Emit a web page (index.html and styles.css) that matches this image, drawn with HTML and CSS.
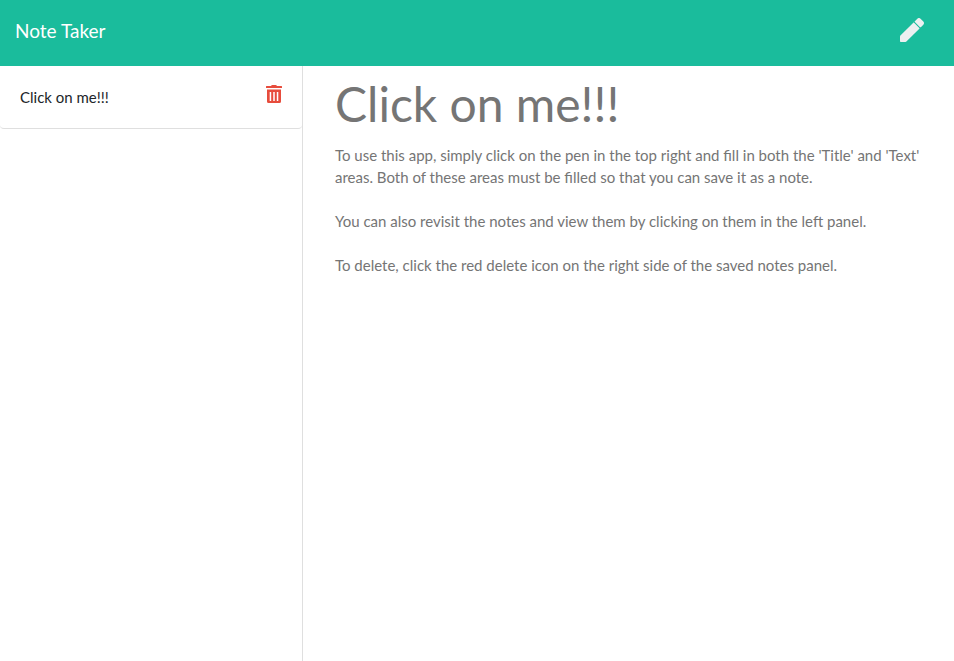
FILE: index.html
```html
<!DOCTYPE html>
<html lang="en">
<head>
<meta charset="utf-8">
<meta name="viewport" content="width=device-width, initial-scale=1">
<title>Note Taker</title>
<link rel="stylesheet" href="styles.css">
</head>
<body>
<header class="navbar">
  <a class="brand" href="#">Note Taker</a>
  <button class="icon-button new-note" type="button" aria-label="New note">
    <svg viewBox="0 0 512 512" width="24" height="24" aria-hidden="true"><path fill="currentColor" d="M498 142l-54 54c-5 5-12 5-17 0l-111-111c-5-5-5-12 0-17l54-54c19-19 49-19 68 0l60 60c19 19 19 49 0 68zM284 100c5-5 12-5 17 0l111 111c5 5 5 12 0 17L142 498c-8 9-16 14-28 14H16c-9 0-16-7-16-16v-98c0-12 5-20 14-28z"/></svg>
  </button>
</header>
<main class="layout">
  <aside class="sidebar">
    <ul class="note-list">
      <li class="note-item">
        <a class="note-link" href="#">Click on me!!!</a>
        <button class="icon-button delete-note" type="button" aria-label="Delete note">
          <svg viewBox="0 0 16 18" width="16" height="18" aria-hidden="true"><path fill="currentColor" fill-rule="evenodd" d="M.5 1H5l.6-.7Q6 0 6.500 0h3q.5 0 .9.300L11 1h4.500q.5 0 .5.500V3H0V1.500Q0 1 .5 1zM1 4.500h14v12q0 1.500-1.500 1.500h-11Q1 18 1 16.500zM3.700 7v9h1.500V7zM7.250 7v9h1.500V7zM10.800 7v9h1.500V7z"/></svg>
        </button>
      </li>
    </ul>
  </aside>
  <article class="note">
    <h1 class="note-title">Click on me!!!</h1>
    <div class="note-text">
      <p>To use this app, simply click on the pen in the top right and fill in both the 'Title' and 'Text' areas. Both of these areas must be filled so that you can save it as a note.</p>
      <p>You can also revisit the notes and view them by clicking on them in the left panel.</p>
      <p>To delete, click the red delete icon on the right side of the saved notes panel.</p>
    </div>
  </article>
</main>
</body>
</html>
```

FILE: styles.css
```css
* {
  box-sizing: border-box;
}

body {
  display: flex;
  flex-direction: column;
  min-height: 100vh;
  margin: 0;
  background: #fff;
  color: #212529;
  font: 15px/22px Lato, sans-serif;
}

.navbar {
  display: flex;
  align-items: flex-start;
  justify-content: space-between;
  min-height: 66px;
  padding: 17px 30px 17px 15px;
  background: #1abc9c;
  color: #fff;
}

.brand {
  color: inherit;
  font-size: 19px;
  line-height: 28px;
  text-decoration: none;
}

.icon-button {
  display: flex;
  padding: 0;
  border: 0;
  background: none;
  cursor: pointer;
}

.new-note {
  padding-top: 1px;
  color: #ecf0f1;
}

.layout {
  display: grid;
  flex: 1;
  grid-template-columns: 303px minmax(0, 1fr);
}

.sidebar {
  border-right: 1px solid #dfdfdf;
}

.note-list {
  margin: 0;
  padding: 0;
  list-style: none;
}

.note-item {
  display: flex;
  align-items: flex-start;
  justify-content: space-between;
  min-height: 63px;
  padding: 19px 20px;
  border-bottom: 1px solid #dfdfdf;
  border-radius: 0 0 4px 4px;
}

.note-link {
  color: #212529;
  line-height: 24px;
  text-decoration: none;
}

.delete-note {
  color: #e74c3c;
}

.note {
  padding: 10px 32px;
}

.note-title {
  margin: 0 0 12px;
  color: #757575;
  font-size: 48px;
  font-weight: 400;
  line-height: 56px;
}

.note-text {
  color: #757575;
}

.note-text p {
  margin: 0 0 22px;
}
```
